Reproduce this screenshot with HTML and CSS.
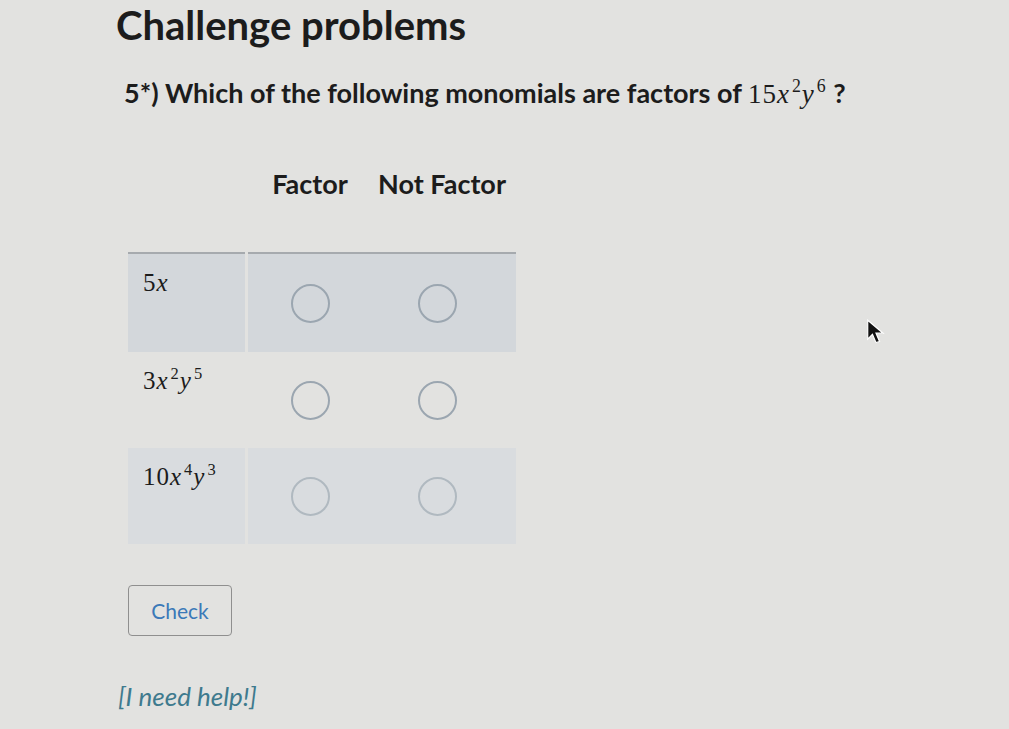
FILE: index.html
```html
<!DOCTYPE html>
<html lang="en">
<head>
    <meta charset="UTF-8">
    <title>Challenge problems</title>
    <link rel="stylesheet" href="styles.css">
</head>
<body>
    <div class="page">
        <h1>Challenge problems</h1>

        <p class="question">5*) Which of the following monomials are factors of
            <span class="math">15<i>x</i><sup>2</sup><i>y</i><sup>6</sup></span> ?</p>

        <div class="grid">
            <div class="row head">
                <div class="label"></div>
                <div class="choice">Factor</div>
                <div class="choice wide">Not Factor</div>
            </div>
            <div class="row first shaded">
                <div class="label"><span class="math">5<i>x</i></span></div>
                <div class="choice"><span class="radio"></span></div>
                <div class="choice wide"><span class="radio"></span></div>
            </div>
            <div class="row">
                <div class="label"><span class="math">3<i>x</i><sup>2</sup><i>y</i><sup>5</sup></span></div>
                <div class="choice"><span class="radio"></span></div>
                <div class="choice wide"><span class="radio"></span></div>
            </div>
            <div class="row shaded light">
                <div class="label"><span class="math">10<i>x</i><sup>4</sup><i>y</i><sup>3</sup></span></div>
                <div class="choice"><span class="radio"></span></div>
                <div class="choice wide"><span class="radio"></span></div>
            </div>
        </div>

        <button class="check">Check</button>

        <a class="help" href="#">[I need help!]</a>
    </div>

    <!-- mouse pointer left on screen -->
    <svg class="cursor" width="20" height="26" viewBox="0 0 16 22">
        <path d="M1 1 L1 17 L5 13 L8 20 L11 19 L8 12 L14 12 Z" fill="#111" stroke="#fff" stroke-width="1"/>
    </svg>
</body>
</html>
```

FILE: styles.css
```css
body {
    margin: 0;
    background-color: #e2e2e0;
    color: #1c1c1c;
    font-family: 'Lato', 'Liberation Sans', sans-serif;
    height: 729px;
    overflow: hidden;
    position: relative;
}
.page {
    padding: 0 0 0 116px;
}
h1 {
    margin: 0;
    padding-top: 1px;
    font-size: 40px;
    font-weight: bold;
    line-height: 48px;
}
.question {
    margin: 27px 0 0 8px;
    font-size: 27px;
    font-weight: bold;
    line-height: 34px;
}
.math {
    font-family: 'Liberation Serif', serif;
    font-weight: normal;
    font-size: 27px;
    letter-spacing: 1px;
}
.math sup {
    font-size: 0.66em;
    vertical-align: 0.6em;
    line-height: 0;
    margin-left: 2px;
}
.grid {
    margin: 46px 0 0 12px;
}
.row {
    display: flex;
    gap: 3px;
}
.label {
    width: 117px;
    box-sizing: border-box;
    padding: 15px 0 0 15px;
}
.label .math {
    font-size: 25px;
}
.choice {
    width: 124px;
    display: flex;
    justify-content: center;
    align-items: center;
}
.choice.wide {
    width: 144px;
    box-sizing: border-box;
    padding-right: 14px;
    margin-left: -3px;
}
.head {
    height: 52px;
    font-size: 27px;
    font-weight: bold;
    align-items: center;
}
.head .choice.wide {
    padding-right: 4px;
}
.head + .row {
    margin-top: 43px;
}
.row:not(.head) {
    height: 96px;
}
.row.first {
    height: 100px;
}
.first > div {
    border-top: 2px solid #a6aaae;
}
.shaded > div {
    background-color: #d3d7db;
}
.shaded.light > div {
    background-color: #d9dcdf;
}
.radio {
    display: block;
    width: 35px;
    height: 35px;
    border: 2px solid #9ba6b0;
    border-radius: 50%;
}
.light .radio {
    border-color: #b0b9c0;
}
.check {
    display: block;
    margin: 41px 0 0 12px;
    width: 104px;
    height: 51px;
    background: transparent;
    border: 1px solid #8f8f8f;
    border-radius: 4px;
    font-family: 'Lato', 'Liberation Sans', sans-serif;
    font-size: 21px;
    color: #3b79b8;
}
.help {
    display: inline-block;
    margin-top: 44px;
    margin-left: 2px;
    font-size: 26px;
    font-style: italic;
    color: #3e7a8e;
    text-decoration: none;
}
.cursor {
    position: absolute;
    left: 866px;
    top: 319px;
}
```
